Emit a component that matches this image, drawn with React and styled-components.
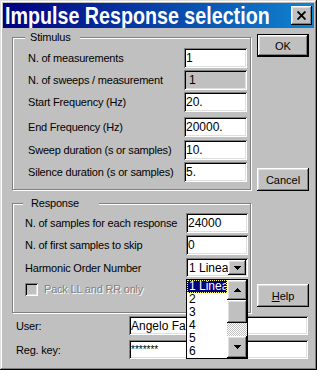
import styled, { createGlobalStyle, css } from "styled-components";

const GlobalStyle = createGlobalStyle`
  html, body { margin: 0; padding: 0; background: #c0c0c0; }
  body { font-family: "Liberation Sans", Arial, sans-serif; font-size: 11px; color: #000; }
  * { box-sizing: border-box; }
`;

const raised = css`
  box-shadow: inset -1px -1px #000, inset 1px 1px #fff, inset -2px -2px #808080, inset 2px 2px #dfdfdf;
`;
const sunken = css`
  box-shadow: inset 1px 1px #808080, inset -1px -1px #fff, inset 2px 2px #000, inset -2px -2px #dfdfdf;
`;

const Window = styled.div`
  width: 317px;
  height: 370px;
  padding: 3px;
  background: #c0c0c0;
  box-shadow: inset -1px -1px #000, inset 1px 1px #dfdfdf, inset -2px -2px #808080, inset 2px 2px #fff;
  display: flex;
  flex-direction: column;
`;

const TitleBar = styled.div`
  height: 25px;
  display: flex;
  align-items: center;
  padding: 0 2px;
  background: linear-gradient(90deg, #000080, #1084d0);
  overflow: hidden;
`;

const Title = styled.span`
  flex: 1;
  min-width: 0;
  color: #fff;
  font-weight: bold;
  font-size: 24px;
  line-height: 25px;
  white-space: nowrap;
  transform: scaleX(0.82);
  transform-origin: left center;
`;

const CloseButton = styled.div`
  flex: none;
  width: 21px;
  height: 19px;
  background: #c0c0c0;
  ${raised}
  display: flex;
  align-items: center;
  justify-content: center;
`;

const Body = styled.div`
  flex: 1;
  display: flex;
  flex-direction: column;
  padding: 6px 5px 0 9px;
`;

const Upper = styled.div`
  display: flex;
  gap: 6px;
  align-items: flex-start;
`;

const GroupColumn = styled.div`
  width: 239px;
  display: flex;
  flex-direction: column;
`;

const Group = styled.div`
  position: relative;
  height: ${(p) => p.$h}px;
  margin-top: ${(p) => p.$top}px;
  padding: ${(p) => p.$pad};
  border: 1px solid #808080;
  box-shadow: inset 1px 1px #fff, 1px 1px #fff;
  display: flex;
  flex-direction: column;
`;

const Legend = styled.span`
  position: absolute;
  top: -7px;
  left: ${(p) => p.$left}px;
  padding: ${(p) => p.$pad};
  line-height: 13px;
  letter-spacing: -0.2px;
  background: #c0c0c0;
`;

const Row = styled.div`
  display: flex;
  align-items: center;
  justify-content: space-between;
  height: ${(p) => p.$h || 20}px;
  margin-top: ${(p) => p.$top || 0}px;
  white-space: nowrap;
`;

const Label = styled.span`
  letter-spacing: -0.2px;
  flex: ${(p) => (p.$grow ? 1 : "none")};
`;

const Field = styled.input`
  width: ${(p) => p.$w}px;
  height: ${(p) => p.$h || 20}px;
  margin: 0 ${(p) => p.$mr || 0}px 0 0;
  border: 0;
  outline: none;
  padding: ${(p) => p.$pt || 0}px 0 0 ${(p) => (p.$disabled ? 5 : 2)}px;
  background: ${(p) => (p.$disabled ? "#c0c0c0" : "#fff")};
  ${sunken}
  font: ${(p) => p.$fs || 12}px "Liberation Sans", Arial, sans-serif;
  color: #000;
`;

const ComboWrap = styled.div`
  position: relative;
  width: 62px;
  height: 19px;
`;

const Combo = styled.div`
  height: 19px;
  padding: 2px;
  background: #fff;
  ${sunken}
  display: flex;
  align-items: center;
  font-size: 12px;
`;

const ComboText = styled.span`
  flex: 1;
  min-width: 0;
  padding-left: 1px;
  overflow: hidden;
  white-space: nowrap;
`;

const ArrowButton = styled.div`
  flex: none;
  width: ${(p) => p.$w}px;
  height: ${(p) => p.$h}px;
  background: #c0c0c0;
  ${raised}
  display: flex;
  align-items: center;
  justify-content: center;
`;

const ListBox = styled.div`
  position: absolute;
  top: 21px;
  left: 0;
  z-index: 2;
  width: 62px;
  border: 1px solid #000;
  background: #fff;
  display: flex;
`;

const Items = styled.div`
  flex: 1;
  min-width: 0;
  display: flex;
  flex-direction: column;
`;

const Item = styled.div`
  height: 13px;
  line-height: 11px;
  font-size: 12px;
  padding-left: 1px;
  white-space: nowrap;
  overflow: hidden;
  border: 1px solid transparent;
  ${(p) =>
    p.$selected &&
    css`
      background: #000080;
      color: #fff;
      border: 1px dotted #ffff80;
    `}
`;

const ScrollBar = styled.div`
  width: 20px;
  display: flex;
  flex-direction: column;
`;

const Track = styled.div`
  height: ${(p) => p.$h}px;
  background: repeating-conic-gradient(#fff 0 25%, #c0c0c0 0 50%) 0 0 / 2px 2px;
`;

const CheckRow = styled.div`
  display: flex;
  align-items: center;
  gap: 6px;
  height: 14px;
  margin-top: 5px;
`;

const CheckBox = styled.div`
  width: 13px;
  height: 13px;
  background: #c0c0c0;
  ${sunken}
`;

const DisabledText = styled.span`
  color: #808080;
  letter-spacing: -0.2px;
  text-shadow: 1px 1px #fff;
`;

const ButtonColumn = styled.div`
  width: 52px;
  display: flex;
  flex-direction: column;
`;

const Button = styled.div`
  width: 52px;
  height: 23px;
  margin-top: ${(p) => p.$top || 0}px;
  background: #c0c0c0;
  display: flex;
  align-items: center;
  justify-content: center;
  font-size: 11px;
  ${(p) =>
    p.$default
      ? css`
          box-shadow: inset 0 0 0 1px #000, inset -2px -2px #000, inset 2px 2px #fff,
            inset -3px -3px #808080, inset 3px 3px #dfdfdf;
        `
      : raised}
`;

const BottomRow = styled.div`
  display: flex;
  align-items: center;
  height: 19px;
  margin-top: ${(p) => p.$top}px;
  padding-left: 4px;
`;

const Arrow = ({ up }) => (
  <svg width="7" height="4" viewBox="0 0 7 4" shapeRendering="crispEdges">
    <path
      d={up ? "M3 0h1v1h1v1h1v1h1v1H0V3h1V2h1V1h1z" : "M0 0h7v1H6v1H5v1H4v1H3V3H2V2H1V1H0z"}
      fill="#000"
    />
  </svg>
);

const stimulus = [
  { label: "N. of measurements", value: "1", top: 0 },
  { label: "N. of sweeps / measurement", value: "1", top: 2, disabled: true },
  { label: "Start Frequency (Hz)", value: "20.", top: 2 },
  { label: "End Frequency (Hz)", value: "20000.", top: 5 },
  { label: "Sweep duration (s or samples)", value: "10.", top: 3 },
  { label: "Silence duration (s or samples)", value: "5.", top: 2 },
];

const orders = ["1 Linear", "2", "3", "4", "5", "6"];

export default function App() {
  return (
    <>
      <GlobalStyle />
      <Window>
        <TitleBar>
          <Title>Impulse Response selection</Title>
          <CloseButton>
            <svg width="9" height="9" viewBox="0 0 9 9">
              <path d="M0.5 0.5L8.5 8.5M8.5 0.5L0.5 8.5" stroke="#000" strokeWidth="1.9" />
            </svg>
          </CloseButton>
        </TitleBar>
        <Body>
          <Upper>
            <GroupColumn>
              <Group $h={153} $top={3} $pad="10px 3px 0 15px">
                <Legend $left={12} $pad="0 9px 0 5px">Stimulus</Legend>
                {stimulus.map((r) => (
                  <Row key={r.label} $top={r.top}>
                    <Label>{r.label}</Label>
                    <Field $w={63} $disabled={r.disabled} readOnly defaultValue={r.value} />
                  </Row>
                ))}
              </Group>
              <Group $h={110} $top={13} $pad="9px 2px 0 12px">
                <Legend $left={10} $pad="0 20px 0 8px">Response</Legend>
                <Row>
                  <Label>N. of samples for each response</Label>
                  <Field $w={62} readOnly defaultValue="24000" />
                </Row>
                <Row $top={2}>
                  <Label>N. of first samples to skip</Label>
                  <Field $w={62} readOnly defaultValue="0" />
                </Row>
                <Row $top={3} $h={19}>
                  <Label>Harmonic Order Number</Label>
                  <ComboWrap>
                    <Combo>
                      <ComboText>1 Linear</ComboText>
                      <ArrowButton $w={18} $h={15}>
                        <Arrow />
                      </ArrowButton>
                    </Combo>
                    <ListBox>
                      <Items>
                        {orders.map((o, i) => (
                          <Item key={o} $selected={i === 0}>
                            {o}
                          </Item>
                        ))}
                      </Items>
                      <ScrollBar>
                        <ArrowButton $w={20} $h={20}>
                          <Arrow up />
                        </ArrowButton>
                        <ArrowButton $w={20} $h={23} />
                        <Track $h={13} />
                        <ArrowButton $w={20} $h={22}>
                          <Arrow />
                        </ArrowButton>
                      </ScrollBar>
                    </ListBox>
                  </ComboWrap>
                </Row>
                <CheckRow>
                  <CheckBox />
                  <DisabledText>Pack LL and RR only</DisabledText>
                </CheckRow>
              </Group>
            </GroupColumn>
            <ButtonColumn>
              <Button $default>OK</Button>
              <Button $top={111}>Cancel</Button>
              <Button $top={93}>
                <span>
                  <u>H</u>elp
                </span>
              </Button>
            </ButtonColumn>
          </Upper>
          <BottomRow $top={3}>
            <Label $grow>User:</Label>
            <Field $w={179} $h={19} $mr={1} readOnly defaultValue="Angelo Farina" />
          </BottomRow>
          <BottomRow $top={5}>
            <Label $grow>Reg. key:</Label>
            <Field $w={179} $h={19} $mr={1} $fs={10} $pt={0} readOnly defaultValue="*******" />
          </BottomRow>
        </Body>
      </Window>
    </>
  );
}
